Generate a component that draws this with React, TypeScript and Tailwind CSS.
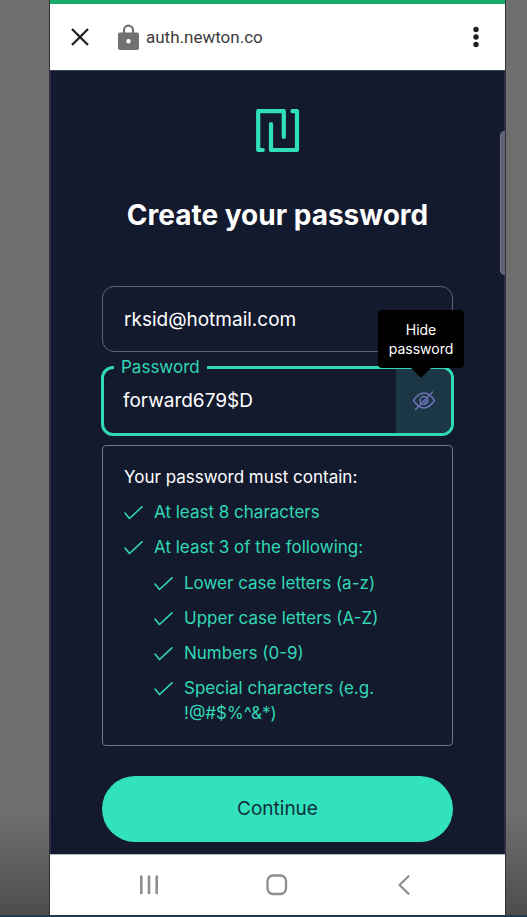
import type { ReactNode } from "react";

const uiFont = "font-[Inter,'Liberation_Sans',sans-serif]";

function CheckIcon() {
  return (
    <svg className="mt-[6px] h-[14px] w-[20px] shrink-0" viewBox="0 0 20 14" fill="none" stroke="currentColor" strokeWidth="1.6" strokeLinecap="round" strokeLinejoin="round" aria-hidden="true">
      <path d="M1 7 5.500 12.500 18 0.800" />
    </svg>
  );
}

function Rule({ children }: { children: ReactNode }) {
  return (
    <div className="flex gap-[10px]">
      <CheckIcon />
      <span>{children}</span>
    </div>
  );
}

function AddressBar() {
  return (
    <header className="flex h-[71px] items-center border-t-4 border-b border-t-[#18ac6b] border-b-[#3c4652] bg-white px-5">
      <button type="button" aria-label="Close" className="text-[#202124]">
        <svg className="size-5" viewBox="0 0 20 20" fill="none" stroke="currentColor" strokeWidth="2.3" aria-hidden="true">
          <path d="M2 2 18 18M18 2 2 18" />
        </svg>
      </button>
      <svg className="ml-7 h-[26px] w-[21px]" viewBox="0 0 21 26" aria-hidden="true">
        <path d="M6 9V6.2a4.5 4.5 0 0 1 9 0V9" fill="none" stroke="#717171" strokeWidth="2.2" />
        <path fillRule="evenodd" fill="#717171" d="M2 8.5h17a2 2 0 0 1 2 2V24a2 2 0 0 1-2 2H2a2 2 0 0 1-2-2V10.5a2 2 0 0 1 2-2zM10.5 15a2.2 2.2 0 1 0 0 4.4 2.2 2.2 0 0 0 0-4.4z" />
      </svg>
      <span className="ml-[7px] grow font-[Roboto,sans-serif] text-[17px] leading-6 text-[#3c3c3c]">auth.newton.co</span>
      <button type="button" aria-label="More options" className="text-[#202124]">
        <svg className="h-6 w-5" viewBox="0 0 20 24" fill="currentColor" aria-hidden="true">
          <circle cx="11" cy="4.5" r="2.7" />
          <circle cx="11" cy="12" r="2.7" />
          <circle cx="11" cy="19.5" r="2.7" />
        </svg>
      </button>
    </header>
  );
}

function Logo() {
  return (
    <svg className="mx-auto size-[44px]" viewBox="0 0 44 44" fill="none" stroke="#31e0ba" strokeWidth="4.2" strokeLinecap="round" strokeLinejoin="round" aria-label="Newton" role="img">
      <path d="M6.8 41H2.2V2.2H27.8V28" />
      <path d="M15 15.2V41H41V2.2H36.4" />
    </svg>
  );
}

function PasswordField() {
  return (
    <div className="relative -mx-px mt-[14px] flex h-[70px] rounded-[12px] border-[3px] border-[#31d8b5]">
      <label htmlFor="password" className="absolute -top-[14px] left-[10px] bg-[#141a2e] px-[7px] text-[17px] leading-6 text-[#31d8b5]">
        Password
      </label>
      <input id="password" type="text" defaultValue="forward679$D" className="w-0 grow bg-transparent pl-[19px] text-[19px] text-white outline-none" />
      <div className="relative flex w-[55px] shrink-0">
        <button type="button" aria-label="Hide password" aria-describedby="password-tip" className="flex grow items-center justify-center rounded-r-[9px] bg-[#1b3644] text-[#6c72b5]">
          <svg className="h-5 w-6" viewBox="0 0 24 20" fill="none" stroke="currentColor" strokeWidth="1.5" strokeLinecap="round" aria-hidden="true">
            <path d="M1.5 9.5C5 4.200 8.500 2 12 2s7 2.200 10.500 7.500C19 14.800 15.500 17 12 17s-7-2.200-10.500-7.500z" />
            <circle cx="12" cy="9.5" r="4" />
            <path d="M20.500 1 3.500 18.500M12.500 12a2.200 2.200 0 0 0 1.700-2.500" />
          </svg>
        </button>
        <div id="password-tip" role="tooltip" className="absolute -right-[13px] bottom-[65px] w-[86px] rounded-[4px] bg-black py-[10px] text-center text-[14px] leading-[19px] text-white">
          Hide password
          <svg className="absolute top-full left-1/2 h-[10px] w-5 -translate-x-1/2" viewBox="0 0 20 10" aria-hidden="true">
            <path d="M0 0h20L10 10z" />
          </svg>
        </div>
      </div>
    </div>
  );
}

function PasswordRules() {
  return (
    <section className="mt-[9px] rounded-[4px] border border-[#717486] px-[21px] py-[19px] text-[17px] leading-[25px] text-[#31d8b5]">
      <p className="text-white">Your password must contain:</p>
      <ul className="mt-[10px] flex flex-col gap-[10px]">
        <li><Rule>At least 8 characters</Rule></li>
        <li>
          <Rule>At least 3 of the following:</Rule>
          <ul className="mt-[11px] ml-[30px] flex flex-col gap-[10px]">
            <li><Rule>Lower case letters (a-z)</Rule></li>
            <li><Rule>Upper case letters (A-Z)</Rule></li>
            <li><Rule>Numbers (0-9)</Rule></li>
            <li><Rule>Special characters (e.g. !@#$%^&amp;*)</Rule></li>
          </ul>
        </li>
      </ul>
    </section>
  );
}

function NavBar() {
  return (
    <nav className="flex grow items-center justify-between border-t border-[#b6b8c0] bg-white pr-[90px] pl-[88px] text-[#8d8d8d]">
      <button type="button" aria-label="Recent apps">
        <svg className="size-[22px]" viewBox="0 0 22 22" fill="none" stroke="currentColor" strokeWidth="2.6" strokeLinecap="round" aria-hidden="true">
          <path d="M3.3 2.6v16.4M11 2.6v16.4M18.7 2.6v16.4" />
        </svg>
      </button>
      <button type="button" aria-label="Home">
        <svg className="size-[22px]" viewBox="0 0 22 22" fill="none" stroke="currentColor" strokeWidth="2.3" aria-hidden="true">
          <rect x="1.5" y="1.5" width="18.5" height="18.5" rx="5.5" />
        </svg>
      </button>
      <button type="button" aria-label="Back">
        <svg className="size-[22px]" viewBox="0 0 22 22" fill="none" stroke="currentColor" strokeWidth="2.2" strokeLinecap="round" strokeLinejoin="round" aria-hidden="true">
          <path d="M15.5 2.2 6.500 11l9 8.800" />
        </svg>
      </button>
    </nav>
  );
}

export default function App() {
  return (
    <div className={`flex min-h-screen border-b-2 border-[#213b4b] bg-linear-to-b from-[#6e6e6e] from-89% to-[#4d4d4d] pr-[21px] pl-[49px] ${uiFont}`}>
      <div className="relative flex min-w-0 grow flex-col border-x border-[#333333] bg-[#141a2e]">
        <AddressBar />
        <main className="flex flex-col border-x border-[#252b4e] px-[51px] pt-[38px] pb-3">
          <Logo />
          <h1 className="mt-[42px] text-center text-[28px] leading-10 font-bold whitespace-nowrap text-white">Create your password</h1>
          <input type="email" aria-label="Email" defaultValue="rksid@hotmail.com" className="mt-[51px] h-[66px] w-full rounded-[12px] border border-[#5f6275] px-[21px] text-[19px] text-white outline-none" />
          <PasswordField />
          <PasswordRules />
          <button type="button" className="mt-[30px] h-[66px] rounded-full bg-[#31e2bc] text-[19px] text-[#12303c]">Continue</button>
        </main>
        <NavBar />
        <div className="absolute top-[131px] right-0 h-[144px] w-[5px] rounded-l-[5px] border border-r-0 border-[#777887] bg-[#5f6072]" />
      </div>
    </div>
  );
}
